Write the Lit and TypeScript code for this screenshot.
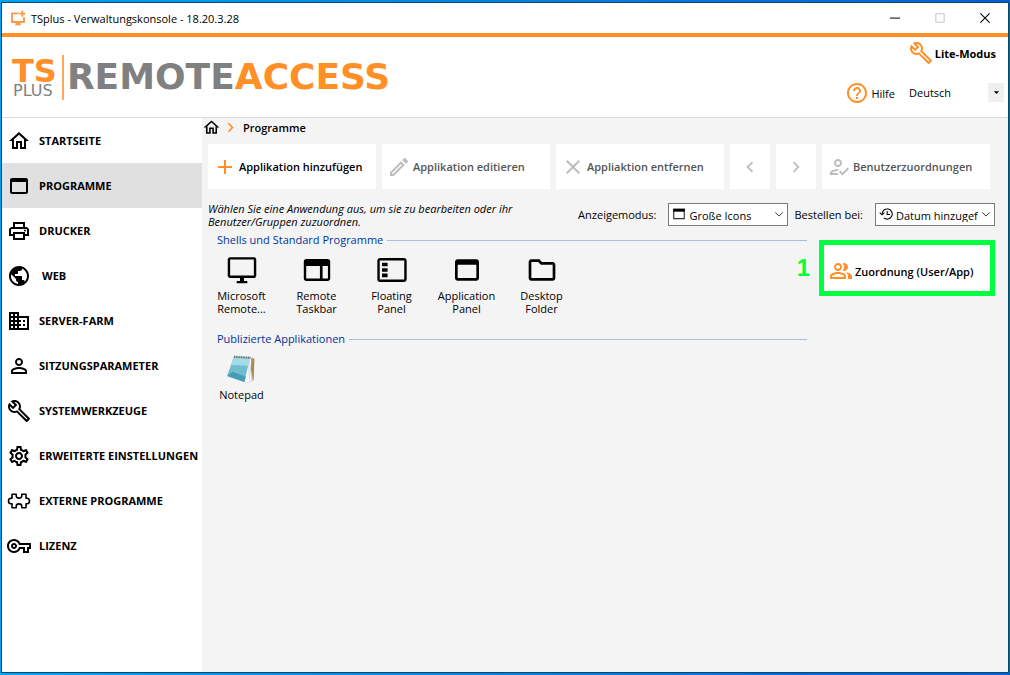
import { LitElement, html, svg, css } from "lit";
import { customElement, property, state } from "lit/decorators.js";
import { classMap } from "lit/directives/class-map.js";

const ICONS: Record<string, any> = {
  home: svg`<path d="M12 5.69l5 4.5V18h-2v-6H9v6H7v-7.81l5-4.5M12 3L2 12h3v8h6v-6h2v6h6v-8h3L12 3z"/>`,
  window: svg`<path d="M19 4H5c-1.11 0-2 .9-2 2v12c0 1.1.89 2 2 2h14c1.1 0 2-.9 2-2V6c0-1.1-.89-2-2-2zm0 14H5V8h14v10z"/>`,
  print: svg`<path d="M19 8h-1V3H6v5H5c-1.66 0-3 1.34-3 3v6h4v4h12v-4h4v-6c0-1.66-1.34-3-3-3zM8 5h8v3H8V5zm8 12v2H8v-4h8v2zm2-2v-2H6v2H4v-4c0-.55.45-1 1-1h14c.55 0 1 .45 1 1v4h-2z"/><circle cx="18" cy="11.5" r="1"/>`,
  globe: svg`<path d="M12 2C6.48 2 2 6.48 2 12s4.48 10 10 10 10-4.48 10-10S17.52 2 12 2zm-1 17.93c-3.95-.49-7-3.85-7-7.93 0-.62.08-1.21.21-1.79L9 15v1c0 1.1.9 2 2 2v1.93zm6.9-2.54c-.26-.81-1-1.39-1.9-1.39h-1v-3c0-.55-.45-1-1-1H8v-2h2c.55 0 1-.45 1-1V7h2c1.1 0 2-.9 2-2v-.41c2.93 1.19 5 4.06 5 7.41 0 2.08-.8 3.97-2.1 5.39z"/>`,
  farm: svg`<path d="M12 7V3H2v18h20V7H12zM6 19H4v-2h2v2zm0-4H4v-2h2v2zm0-4H4V9h2v2zm0-4H4V5h2v2zm4 12H8v-2h2v2zm0-4H8v-2h2v2zm0-4H8V9h2v2zm0-4H8V5h2v2zm10 12h-8v-2h2v-2h-2v-2h2v-2h-2V9h8v10zm-2-8h-2v2h2v-2zm0 4h-2v2h2v-2z"/>`,
  person: svg`<path d="M12 5.9a2.1 2.1 0 110 4.2 2.1 2.1 0 010-4.2m0 9c2.97 0 6.1 1.46 6.1 2.1v1.1H5.9V17c0-.64 3.13-2.1 6.1-2.1M12 4C9.79 4 8 5.79 8 8s1.79 4 4 4 4-1.79 4-4-1.79-4-4-4zm0 9c-2.67 0-8 1.34-8 4v3h16v-3c0-2.66-5.33-4-8-4z"/>`,
  wrench: svg`<path d="M22.61 18.99l-9.08-9.08c.93-2.34.45-5.1-1.44-7C9.79.61 6.21.4 3.66 2.26L7.5 6.11 6.08 7.52 2.25 3.69C.39 6.23.6 9.82 2.9 12.11c1.86 1.86 4.57 2.35 6.89 1.48l9.11 9.11c.39.39 1.02.39 1.41 0l2.3-2.3c.4-.38.4-1.01 0-1.41zm-3 1.6l-9.46-9.46c-.61.45-1.29.72-2 .82-1.36.2-2.79-.21-3.83-1.25C3.37 9.76 2.93 8.5 3 7.26l3.09 3.09 4.24-4.24-3.09-3.09c1.24-.07 2.49.37 3.44 1.31 1.08 1.08 1.49 2.57 1.24 3.96-.12.71-.42 1.37-.88 1.96l9.45 9.45-.88.89z"/>`,
  gear: svg`<path d="M19.43 12.98c.04-.32.07-.64.07-.98 0-.34-.03-.66-.07-.98l2.11-1.65c.19-.15.24-.42.12-.64l-2-3.46c-.09-.16-.26-.25-.44-.25-.06 0-.12.01-.17.03l-2.49 1c-.52-.4-1.08-.73-1.69-.98l-.38-2.65C14.46 2.18 14.25 2 14 2h-4c-.25 0-.46.18-.49.42l-.38 2.65c-.61.25-1.17.59-1.69.98l-2.49-1c-.06-.02-.12-.03-.18-.03-.17 0-.34.09-.43.25l-2 3.46c-.13.22-.07.49.12.64l2.11 1.65c-.04.32-.07.65-.07.98 0 .33.03.66.07.98l-2.11 1.65c-.19.15-.24.42-.12.64l2 3.46c.09.16.26.25.44.25.06 0 .12-.01.17-.03l2.49-1c.52.4 1.08.73 1.69.98l.38 2.65c.03.24.24.42.49.42h4c.25 0 .46-.18.49-.42l.38-2.65c.61-.25 1.17-.59 1.69-.98l2.49 1c.06.02.12.03.18.03.17 0 .34-.09.43-.25l2-3.46c.12-.22.07-.49-.12-.64l-2.11-1.65zm-1.98-1.71c.04.31.05.52.05.73 0 .21-.02.43-.05.73l-.14 1.13.89.7 1.08.84-.7 1.21-1.27-.51-1.04-.42-.9.68c-.43.32-.84.56-1.25.73l-1.06.43-.16 1.13-.2 1.35h-1.4l-.19-1.35-.16-1.13-1.06-.43c-.43-.18-.83-.41-1.23-.71l-.91-.7-1.06.43-1.27.51-.7-1.21 1.08-.84.89-.7-.14-1.13c-.03-.31-.05-.54-.05-.74s.02-.43.05-.73l.14-1.13-.89-.7-1.08-.84.7-1.21 1.27.51 1.04.42.9-.68c.43-.32.84-.56 1.25-.73l1.06-.43.16-1.13.2-1.35h1.39l.19 1.35.16 1.13 1.06.43c.43.18.83.41 1.23.71l.91.7 1.06-.43 1.27-.51.7 1.21-1.07.85-.89.7.14 1.13zM12 8c-2.21 0-4 1.79-4 4s1.79 4 4 4 4-1.79 4-4-1.79-4-4-4zm0 6c-1.1 0-2-.9-2-2s.9-2 2-2 2 .9 2 2-.9 2-2 2z"/>`,
  puzzle: svg`<path fill="none" stroke="currentColor" stroke-width="1.6" stroke-linejoin="round" d="M5 5.300h4.200v1.500c0 1.300 1.200 2.300 2.800 2.300s2.800-1 2.800-2.300V5.300H19v4h1c1.400 0 2.500 1.200 2.500 2.700s-1.100 2.700-2.500 2.700h-1v4h-4.200v-1.500c0-1.300-1.200-2.300-2.800-2.300s-2.800 1-2.800 2.300v1.500H5v-4H4c-1.400 0-2.500-1.200-2.500-2.700S2.600 9.300 4 9.300h1z"/>`,
  key: svg`<path d="M22 19h-6v-4h-2.68c-1.14 2.42-3.6 4-6.32 4-3.86 0-7-3.14-7-7s3.14-7 7-7c2.72 0 5.17 1.58 6.32 4H24v6h-2v4zm-4-2h2v-4h2v-2H11.94l-.23-.67C11.01 8.34 9.11 7 7 7c-2.76 0-5 2.24-5 5s2.24 5 5 5c2.11 0 4.01-1.34 4.71-3.33l.23-.67H18v4zM7 15c-1.65 0-3-1.35-3-3s1.35-3 3-3 3 1.35 3 3-1.35 3-3 3zm0-4c-.55 0-1 .45-1 1s.45 1 1 1 1-.45 1-1-.45-1-1-1z"/>`,
  help: svg`<path d="M11 18h2v-2h-2v2zm1-16C6.48 2 2 6.48 2 12s4.48 10 10 10 10-4.48 10-10S17.52 2 12 2zm0 18c-4.41 0-8-3.59-8-8s3.59-8 8-8 8 3.59 8 8-3.59 8-8 8zm0-14c-2.21 0-4 1.79-4 4h2c0-1.1.9-2 2-2s2 .9 2 2c0 2-3 1.75-3 5h2c0-2.25 3-2.5 3-5 0-2.21-1.79-4-4-4z"/>`,
  plus: svg`<path d="M11 5h2v6h6v2h-6v6h-2v-6H5v-2h6z"/>`,
  edit: svg`<path d="M14.06 9.02l.92.92L5.92 19H5v-.92l9.06-9.06M17.66 3c-.25 0-.51.1-.7.29l-1.83 1.83 3.75 3.75 1.83-1.83c.39-.39.39-1.02 0-1.41l-2.34-2.34c-.2-.2-.45-.29-.71-.29zm-3.6 3.19L3 17.25V21h3.75L17.81 9.94l-3.75-3.75z"/>`,
  cross: svg`<path d="M19 6.410L17.590 5 12 10.590 6.410 5 5 6.410 10.590 12 5 17.590 6.410 19 12 13.410 17.590 19 19 17.590 13.410 12z"/>`,
  left: svg`<path d="M15.41 7.41L14 6l-6 6 6 6 1.41-1.41L10.83 12z"/>`,
  right: svg`<path d="M10 6L8.59 7.41 13.17 12l-4.58 4.590L10 18l6-6z"/>`,
  assign: svg`<path d="M11 12c2.21 0 4-1.79 4-4s-1.79-4-4-4-4 1.79-4 4 1.79 4 4 4zm0-6c1.100 0 2 .9 2 2s-.9 2-2 2-2-.9-2-2 .9-2 2-2zM5 18c.2-.63 2.570-1.680 4.960-1.940l2.040-2c-.39-.04-.68-.06-1-.06-2.670 0-8 1.340-8 4v2h9l-2-2H5zm15.600-5.500l-5.130 5.170-2.070-2.080L12 17l3.470 3.500L22 13.910z"/>`,
  group: svg`<path d="M16.67 13.13C18.04 14.06 19 15.32 19 17v3h4v-3c0-2.180-3.570-3.470-6.330-3.870zM15 12c2.210 0 4-1.790 4-4s-1.790-4-4-4c-.47 0-.91.1-1.330.24C14.500 5.270 15 6.580 15 8s-.5 2.730-1.330 3.760c.42.14.86.24 1.330.24zM9 12c2.210 0 4-1.790 4-4s-1.790-4-4-4-4 1.790-4 4 1.790 4 4 4zm0-6c1.100 0 2 .9 2 2s-.9 2-2 2-2-.9-2-2 .9-2 2-2zm0 7c-2.670 0-8 1.340-8 4v3h16v-3c0-2.660-5.330-4-8-4zm6 5H3v-.99C3.200 16.290 6.300 15 9 15s5.800 1.290 6 2v1z"/>`,
  folder: svg`<path d="M9.17 6l2 2H20v10H4V6h5.170M10 4H4c-1.100 0-1.990.9-1.990 2L2 18c0 1.100.9 2 2 2h16c1.100 0 2-.9 2-2V8c0-1.100-.9-2-2-2h-8l-2-2z"/>`,
  monitor: svg`<path d="M20.800 2.400H3.200c-1.100 0-1.900.8-1.900 1.900v11.800c0 1.100.8 1.900 1.900 1.900h7.300v2.200H8v1.700h8v-1.700h-2.500V18h7.300c1.100 0 1.900-.8 1.900-1.900V4.300c0-1.100-.8-1.900-1.900-1.900zm.1 13.800H3.100V4.200h17.800z"/>`,
  taskbar: svg`<path d="M20 3.800H4c-1.100 0-1.900.9-1.900 1.900v12.600c0 1 .8 1.900 1.900 1.900h16c1.100 0 1.900-.9 1.900-1.900V5.700c0-1-.8-1.900-1.900-1.900zM14.200 18.400H3.900V9h10.300zm6 0h-4V9h4z"/>`,
  floating: svg`<path d="M21 3H3c-1.100 0-2 .9-2 2v14c0 1.100.9 2 2 2h18c1.100 0 2-.9 2-2V5c0-1.100-.9-2-2-2zm.2 16.200H2.800V4.800h18.400z"/><path d="M4.500 6.500h4.200v2.700H4.500zm0 4.100h4.200v2.700H4.500zm0 4.100h4.200v2.700H4.500z"/>`,
  smallwin: svg`<path d="M3 4h18v16H3z" fill="#fff" stroke="#333" stroke-width="2"/><path d="M2 3h20v5H2z"/>`,
  history: svg`<g fill="none" stroke="currentColor" stroke-width="1.8"><path d="M5.300 12a8.700 8.700 0 1 1 3 6.600"/><path d="M1.200 9.500l4 4 4-4M14 7v6h5"/></g>`,
  caret: svg`<path d="M3 8l9 9 9-9" fill="none" stroke="currentColor" stroke-width="2.400"/>`,
  triangle: svg`<path d="M3 8h18l-9 9z"/>`,
  app: svg`<g fill="none" stroke="#f9994a" stroke-width="2.800"><path d="M13 5H3v13h18v-7"/><path d="M18.500 1v9M14 5.500h9"/></g><path d="M8 18h8v5H8z" fill="#f9994a"/>`,
  min: svg`<path d="M0 11h24v2.400H0z"/>`,
  max: svg`<path d="M2 2h20v20H2z" fill="none" stroke="currentColor" stroke-width="2.400"/>`,
  close: svg`<path d="M1 1l22 22M23 1L1 23" fill="none" stroke="currentColor" stroke-width="2.600"/>`,
  notepad: svg`<path d="M19 3.500l2.300.8-.5 15.700-2.300 1.500z" fill="#a98b52"/><path d="M17 3.500l3 17-5 2-3-2z" fill="#f7f9fa" stroke="#c7cdd0" stroke-width=".4"/><path d="M6 2.600l12 .8-4.200 18.400L.8 17.200z" fill="#6fbdcf"/><path d="M6 2.600l12 .8-1.400 6.200-13-.6z" fill="#a6dae4"/><path d="M.8 17.200l4-3.200 10 3.800-1 4z" fill="#459cb4"/><path d="M6 2.800l12.500.8" stroke="#5d7178" stroke-width="1.600" stroke-dasharray=".8 .5"/><path d="M17 10l.6 10M18 9l1.200 11" stroke="#b9c4c8" stroke-width=".4"/>`,
};

@customElement("ui-icon")
class UiIcon extends LitElement {
  @property() name = "";
  static styles = css`
    :host { display: inline-flex; flex: none; width: 24px; height: 24px; }
    .glyph { display: block; width: 100%; height: 100%; fill: currentColor; }
  `;
  render() {
    return html`<svg class="glyph" viewBox="0 0 24 24" aria-hidden="true">${ICONS[this.name]}</svg>`;
  }
}

const NAV = [
  ["home", "STARTSEITE"],
  ["window", "PROGRAMME"],
  ["print", "DRUCKER"],
  ["globe", "WEB"],
  ["farm", "SERVER-FARM"],
  ["person", "SITZUNGSPARAMETER"],
  ["wrench", "SYSTEMWERKZEUGE"],
  ["gear", "ERWEITERTE EINSTELLUNGEN"],
  ["puzzle", "EXTERNE PROGRAMME"],
  ["key", "LIZENZ"],
];

const GROUPS = [
  {
    title: "Shells und Standard Programme",
    items: [
      ["monitor", "Microsoft Remote..."],
      ["taskbar", "Remote Taskbar"],
      ["floating", "Floating Panel"],
      ["window", "Application Panel"],
      ["folder", "Desktop Folder"],
    ],
  },
  { title: "Publizierte Applikationen", items: [["notepad", "Notepad"]] },
];

@customElement("app-root")
class AppRoot extends LitElement {
  @state() page = "PROGRAMME";

  static styles = css`
    :host {
      display: block;
      font-family: "Open Sans", "Noto Sans", sans-serif;
      font-size: 11px;
      line-height: 13px;
      color: #000;
    }
    * { box-sizing: border-box; }
    button, select { font: inherit; color: inherit; margin: 0; border: 0; background: none; }
    button { padding: 0; }
    .desktop {
      min-height: 100vh;
      display: flex;
      padding: 2px 1px 2px 1px;
      background: linear-gradient(90deg, #00a2f3, #0060d0);
    }
    .window {
      flex: 1;
      min-width: 0;
      display: flex;
      flex-direction: column;
      border: 1px solid #12476b;
      background: #fff;
    }
    .titlebar { display: flex; align-items: center; height: 30px; padding: 0 1px 0 8px; gap: 5px; }
    .titlebar ui-icon { width: 16px; height: 16px; }
    .caption { flex: 1; font-weight: 400; font-size: 11px; margin: 0; }
    .winbtn { width: 45px; height: 29px; display: flex; align-items: center; justify-content: center; }
    .titlebar .winbtn ui-icon { width: 10px; height: 10px; }
    .titlebar .off { color: #c4c4c4; }
    .controls { display: flex; }
    .header {
      display: flex;
      justify-content: space-between;
      height: 85px;
      border-top: 4px solid #ff8f26;
      border-bottom: 1px solid #dcdcdc;
    }
    .logo { display: flex; align-items: center; padding-left: 10px; font-family: "DejaVu Sans", sans-serif; color: #808080; }
    .mark { display: flex; flex-direction: column; padding-right: 5px; }
    .ts { font-size: 32px; line-height: 26px; font-weight: 700; color: #ff8f26; }
    .plus { font-size: 16px; line-height: 13px; padding-left: 1px; }
    .bar { width: 2px; height: 45px; background: #ffa755; margin-right: 3px; }
    .brand { font-size: 36px; line-height: 40px; font-weight: 700; }
    .brand span { color: #ff8f26; }
    .tools { display: flex; flex-direction: column; align-items: flex-end; padding: 4px 4px 0 0; gap: 16px; }
    .lite { display: flex; align-items: center; gap: 2px; font-weight: 700; margin-right: 8px; }
    .lite ui-icon, .help ui-icon { color: #ff8f26; }
    .row { display: flex; align-items: center; }
    .help { display: flex; align-items: center; gap: 2px; color: #000; text-decoration: none; }
    .pick { position: relative; display: flex; }
    .pick select { appearance: none; width: 100%; outline: 0; border-radius: 0; }
    .lang { width: 97px; height: 20px; margin-left: 12px; }
    .lang select { padding: 0 18px 2px 2px; }
    .lang .drop { position: absolute; right: 0; top: 0; width: 16px; height: 19px; background: #f0f0f0; display: flex; align-items: center; justify-content: center; pointer-events: none; }
    .drop ui-icon { width: 7px; height: 7px; }
    .body { flex: 1; display: flex; min-height: 0; }
    .nav { width: 200px; flex: none; display: flex; flex-direction: column; }
    .navitem { height: 45px; display: flex; align-items: center; gap: 8px; padding-left: 5px; font-weight: 700; white-space: nowrap; text-align: left; }
    .navitem.wide { gap: 11px; }
    .navitem.on { background: #e0e0e0; }
    .main { flex: 1; min-width: 0; background: #f4f4f4; display: flex; flex-direction: column; }
    .crumbs { display: flex; align-items: center; height: 19px; }
    .crumbs .here { font-size: 11px; line-height: 13px; font-weight: 600; margin: 0 0 0 3px; }
    .crumbs ui-icon { width: 19px; height: 19px; }
    .crumbs .sep { color: #ff8f26; width: 19px; }
    .toolbar { display: flex; gap: 6px; padding: 7px 18px 0 6px; }
    .tool {
      flex: 1 1 0;
      height: 45px;
      display: flex;
      align-items: center;
      gap: 2px;
      padding-left: 5px;
      background: #fff;
      font-weight: 600;
      white-space: nowrap;
    }
    .tool:disabled { color: #555; }
    .tool:disabled ui-icon { color: #bdbdbd; }
    .tool.add ui-icon, .tool.map ui-icon { color: #ff8f26; }
    .tool.map { height: auto; padding-top: 6px; }
    .tool.arrow { flex: 0 0 40px; padding: 0; justify-content: center; }
    .tool.arrow ui-icon { width: 22px; height: 22px; }
    .filters { display: flex; align-items: center; padding: 13px 13px 0 6px; height: 38px; }
    .hint { font-style: italic; width: 320px; margin: 0; }
    .filters label { margin-left: auto; margin-right: 12px; }
    .filters label.second { margin: 0 12px 0 6px; }
    .combo { width: 120px; height: 23px; }
    .combo select { background: #fff; border: 1px solid #7a7a7a; padding: 2px 14px 0 20px; }
    .combo .lead { position: absolute; left: 4px; top: 4px; width: 14px; height: 14px; pointer-events: none; }
    .combo .open { position: absolute; right: 4px; top: 6px; width: 10px; height: 10px; pointer-events: none; color: #333; }
    .content { display: flex; padding: 6px 13px 0 0; }
    .lists { flex: 1; min-width: 0; }
    .group { margin: 0 0 17px; }
    .grouphead { display: flex; align-items: center; gap: 4px; padding: 0 0 0 15px; margin: 0; font-size: 11px; line-height: 14px; font-weight: 400; color: #003399; }
    .rule { flex: 1; height: 1px; background: #a9bddf; }
    .items { display: flex; padding-left: 2px; }
    .app { width: 75px; display: flex; flex-direction: column; align-items: center; gap: 3px; padding: 7px 6px 0; text-align: center; }
    .app ui-icon { width: 32px; height: 32px; }
    .side { flex: none; display: flex; gap: 9px; margin-left: -10px; padding-top: 7px; }
    .num { font: 700 24px/56px "Liberation Sans", Arial, sans-serif; color: #00ff40; }
    .focus { width: 176px; height: 56px; border: 5px solid #00ff40; display: flex; }
  `;

  render() {
    return html`
      <div class="desktop">
        <div class="window">
          <div class="titlebar">
            <ui-icon name="app"></ui-icon>
            <h1 class="caption">TSplus - Verwaltungskonsole - 18.20.3.28</h1>
            <div class="controls">
              <button class="winbtn" aria-label="Minimieren"><ui-icon name="min"></ui-icon></button>
              <button class="winbtn off" aria-label="Maximieren"><ui-icon name="max"></ui-icon></button>
              <button class="winbtn" aria-label="Schließen"><ui-icon name="close"></ui-icon></button>
            </div>
          </div>
          <header class="header">
            <div class="logo">
              <div class="mark"><span class="ts">TS</span><span class="plus">PLUS</span></div>
              <div class="bar"></div>
              <div class="brand">REMOTE<span>ACCESS</span></div>
            </div>
            <div class="tools">
              <button class="lite"><ui-icon name="wrench"></ui-icon>Lite-Modus</button>
              <div class="row">
                <a class="help" href="#hilfe"><ui-icon name="help"></ui-icon>Hilfe</a>
                <div class="pick lang">
                  <select aria-label="Sprache"><option>Deutsch</option></select>
                  <span class="drop"><ui-icon name="triangle"></ui-icon></span>
                </div>
              </div>
            </div>
          </header>
          <div class="body">
            <nav class="nav">
              ${NAV.map(
                ([icon, label]) => html`<button
                  class=${classMap({ navitem: true, on: this.page === label, wide: label === "WEB" })}
                  @click=${() => (this.page = label)}
                ><ui-icon name=${icon}></ui-icon>${label}</button>`
              )}
            </nav>
            <main class="main">
              <div class="crumbs">
                <ui-icon name="home"></ui-icon><ui-icon class="sep" name="right"></ui-icon>
                <h2 class="here">Programme</h2>
              </div>
              <div class="toolbar">
                <button class="tool add"><ui-icon name="plus"></ui-icon>Applikation hinzufügen</button>
                <button class="tool" disabled><ui-icon name="edit"></ui-icon>Applikation editieren</button>
                <button class="tool" disabled><ui-icon name="cross"></ui-icon>Appliaktion entfernen</button>
                <button class="tool arrow" disabled aria-label="Zurück"><ui-icon name="left"></ui-icon></button>
                <button class="tool arrow" disabled aria-label="Weiter"><ui-icon name="right"></ui-icon></button>
                <button class="tool" disabled><ui-icon name="assign"></ui-icon>Benutzerzuordnungen</button>
              </div>
              <div class="filters">
                <p class="hint">Wählen Sie eine Anwendung aus, um sie zu bearbeiten oder ihr Benutzer/Gruppen zuzuordnen.</p>
                <label for="view">Anzeigemodus:</label>
                <div class="pick combo">
                  <select id="view"><option>Große Icons</option></select>
                  <ui-icon class="lead" name="smallwin"></ui-icon><ui-icon class="open" name="caret"></ui-icon>
                </div>
                <label class="second" for="sort">Bestellen bei:</label>
                <div class="pick combo">
                  <select id="sort"><option>Datum hinzugef</option></select>
                  <ui-icon class="lead" name="history"></ui-icon><ui-icon class="open" name="caret"></ui-icon>
                </div>
              </div>
              <div class="content">
                <div class="lists">
                  ${GROUPS.map(
                    (g) => html`<section class="group">
                      <h3 class="grouphead">${g.title}<span class="rule"></span></h3>
                      <div class="items">
                        ${g.items.map(([icon, label]) => html`<button class="app"><ui-icon name=${icon}></ui-icon>${label}</button>`)}
                      </div>
                    </section>`
                  )}
                </div>
                <div class="side">
                  <span class="num">1</span>
                  <div class="focus"><button class="tool map"><ui-icon name="group"></ui-icon>Zuordnung (User/App)</button></div>
                </div>
              </div>
            </main>
          </div>
        </div>
      </div>
    `;
  }
}
